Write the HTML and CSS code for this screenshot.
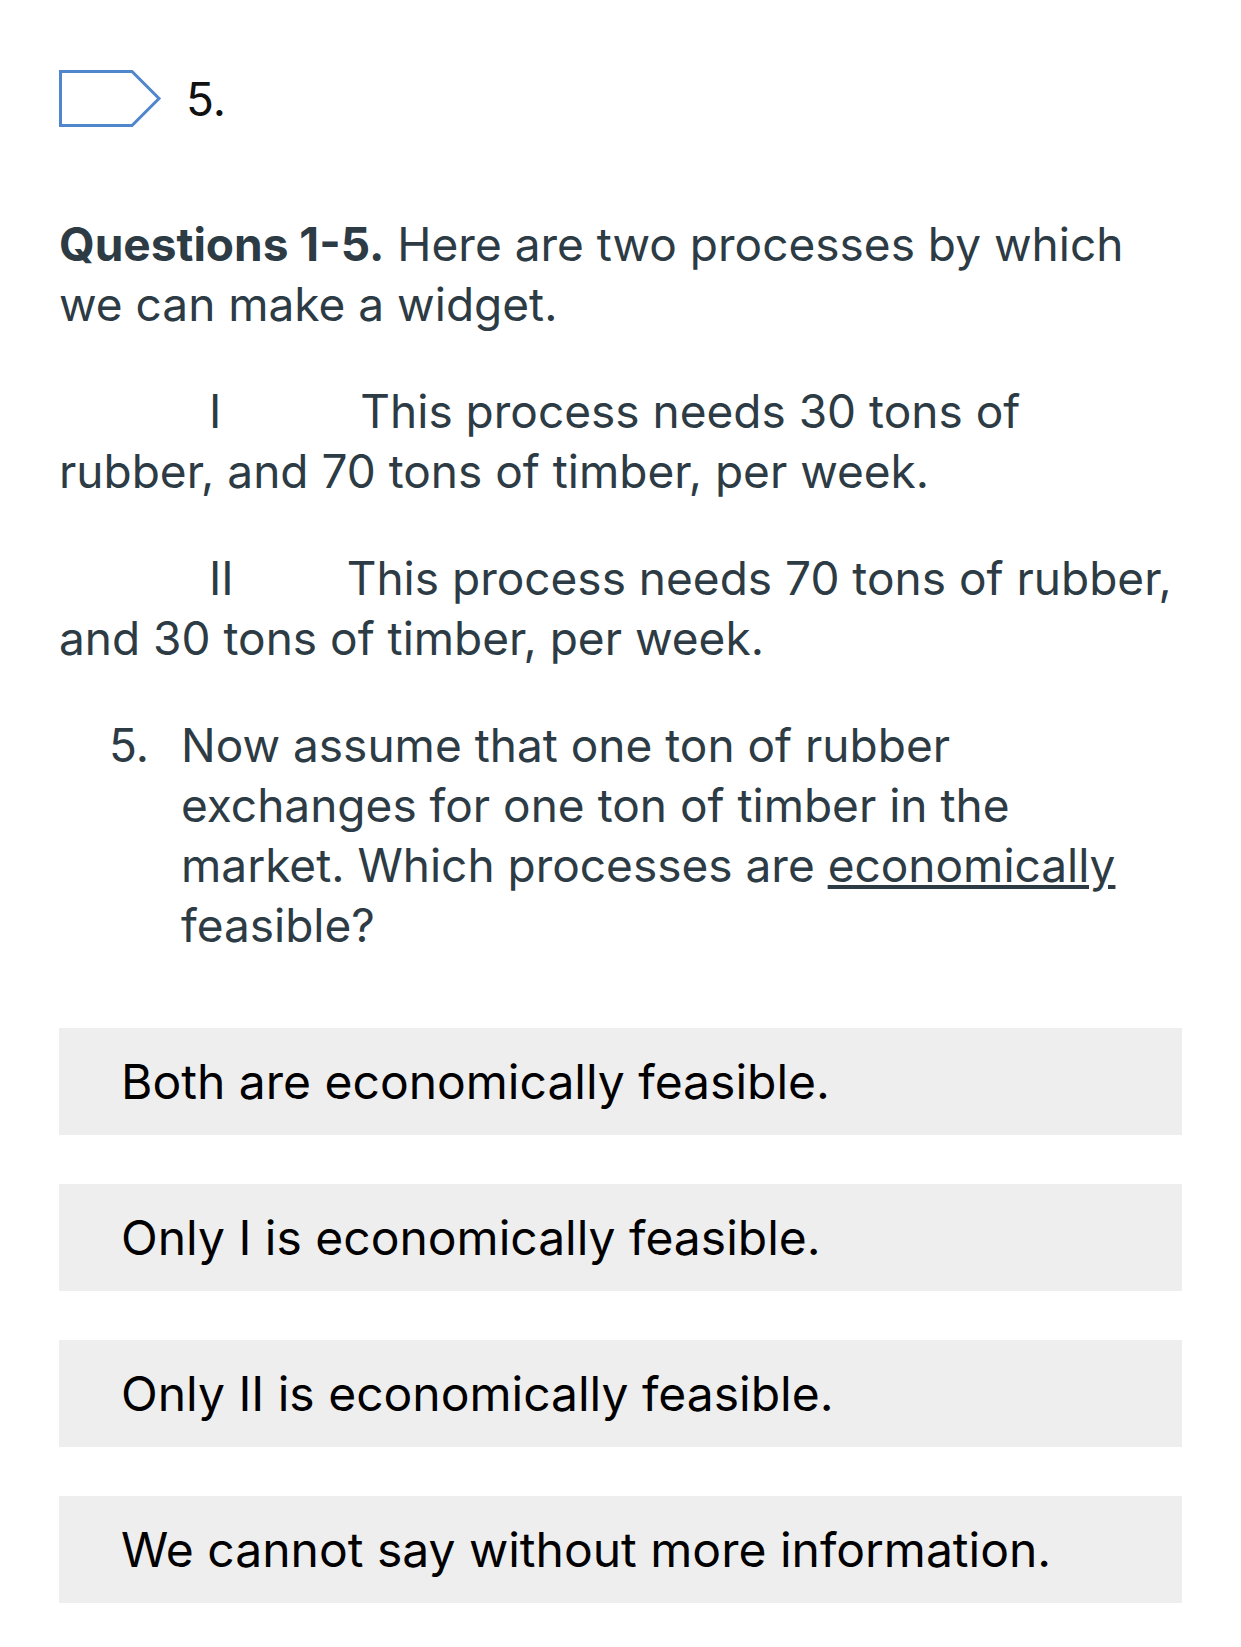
FILE: index.html
```html
<!DOCTYPE html>
<html>
<head>
<meta charset="utf-8">
<link rel="stylesheet" href="styles.css">
</head>
<body>
<div class="page">
  <div class="qhead">
    <svg class="flag" width="104" height="58" viewBox="0 0 104 58">
      <path d="M1.5 1.5 H73 L100 28.5 L73 55.5 H1.5 Z" fill="none" stroke="#4f86cc" stroke-width="3"/>
    </svg>
    <span class="qnum">5.</span>
  </div>
  <div class="qtext">
    <p class="intro"><strong>Questions 1-5.</strong> Here are two processes by which we can make a widget.</p>
    <p class="proc"><span class="roman r1">I</span>This process needs 30 tons of rubber, and 70 tons of timber, per week.</p>
    <p class="proc"><span class="roman r2">II</span>This process needs 70 tons of rubber, and 30 tons of timber, per week.</p>
    <ol class="items">
      <li><span class="num">5.</span><span class="itext">Now assume that one ton of rubber exchanges for one ton of timber in the market. Which processes are <u>economically</u> feasible?</span></li>
    </ol>
  </div>
  <div class="answers">
    <div class="answer">Both are economically feasible.</div>
    <div class="answer">Only I is economically feasible.</div>
    <div class="answer">Only II is economically feasible.</div>
    <div class="answer">We cannot say without more information.</div>
  </div>
</div>
</body>
</html>
```

FILE: styles.css
```css
html, body {
  margin: 0;
  padding: 0;
  background: #ffffff;
}
.page {
  padding: 70px 60px 40px 59px;
  width: 1123px;
  font-family: Inter, "Liberation Sans", sans-serif;
}
.qhead {
  display: flex;
  align-items: center;
  gap: 23px;
  height: 58px;
}
.flag {
  display: block;
}
.qnum {
  font-size: 46px;
  color: #111;
  line-height: 58px;
}
.qtext {
  color: #2d3b45;
  font-size: 46px;
  line-height: 60px;
  margin-top: 86px;
  padding-right: 5px;
}
.qtext p {
  margin: 0 0 47px 0;
}
.intro strong {
  font-weight: 700;
}
.roman {
  margin-left: 150px;
}
.r1 { margin-right: 139px; }
.r2 { margin-right: 113px; }
.items {
  margin: 0;
  padding: 0 0 0 50px;
  list-style: none;
}
.items li {
  display: flex;
}
.num {
  flex: none;
  width: 72px;
}
.itext {
  flex: 1;
  min-width: 0;
}
.answers {
  margin-top: 73px;
  display: flex;
  flex-direction: column;
  gap: 49px;
}
.answer {
  background: #eeeeee;
  height: 107px;
  display: flex;
  align-items: center;
  padding-left: 62px;
  font-size: 48px;
  color: #000;
}
```
